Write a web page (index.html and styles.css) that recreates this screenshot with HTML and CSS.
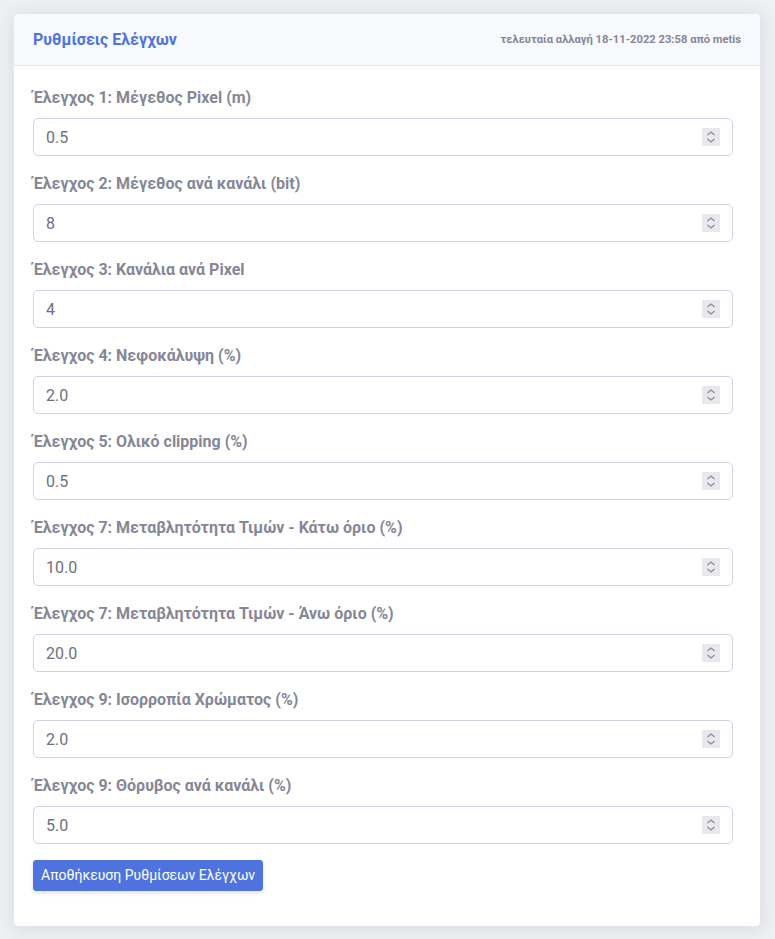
FILE: index.html
```html
<!DOCTYPE html>
<html lang="el">
<head>
<meta charset="utf-8">
<title>Ρυθμίσεις Ελέγχων</title>
<link rel="stylesheet" href="styles.css">
</head>
<body>
<div class="card">
  <div class="card-header">
    <h6 class="card-title">Ρυθμίσεις Ελέγχων</h6>
    <span class="card-meta">τελευταία αλλαγή 18-11-2022 23:58 από metis</span>
  </div>
  <form class="card-body">
    <div class="form-group">
      <label class="form-label">Έλεγχος 1: Μέγεθος Pixel (m)</label>
      <div class="num-field"><input class="form-control" type="text" value="0.5"><span class="spin"><svg viewBox="0 0 18 18" width="18" height="18"><path d="M5.5 7 L9 4 L12.5 7 M5.5 11 L9 14 L12.5 11" fill="none" stroke="#8a8b95" stroke-width="1.3"/></svg></span></div>
    </div>
    <div class="form-group">
      <label class="form-label">Έλεγχος 2: Μέγεθος ανά κανάλι (bit)</label>
      <div class="num-field"><input class="form-control" type="text" value="8"><span class="spin"><svg viewBox="0 0 18 18" width="18" height="18"><path d="M5.5 7 L9 4 L12.5 7 M5.5 11 L9 14 L12.5 11" fill="none" stroke="#8a8b95" stroke-width="1.3"/></svg></span></div>
    </div>
    <div class="form-group">
      <label class="form-label">Έλεγχος 3: Κανάλια ανά Pixel</label>
      <div class="num-field"><input class="form-control" type="text" value="4"><span class="spin"><svg viewBox="0 0 18 18" width="18" height="18"><path d="M5.5 7 L9 4 L12.5 7 M5.5 11 L9 14 L12.5 11" fill="none" stroke="#8a8b95" stroke-width="1.3"/></svg></span></div>
    </div>
    <div class="form-group">
      <label class="form-label">Έλεγχος 4: Νεφοκάλυψη (%)</label>
      <div class="num-field"><input class="form-control" type="text" value="2.0"><span class="spin"><svg viewBox="0 0 18 18" width="18" height="18"><path d="M5.5 7 L9 4 L12.5 7 M5.5 11 L9 14 L12.5 11" fill="none" stroke="#8a8b95" stroke-width="1.3"/></svg></span></div>
    </div>
    <div class="form-group">
      <label class="form-label">Έλεγχος 5: Ολικό clipping (%)</label>
      <div class="num-field"><input class="form-control" type="text" value="0.5"><span class="spin"><svg viewBox="0 0 18 18" width="18" height="18"><path d="M5.5 7 L9 4 L12.5 7 M5.5 11 L9 14 L12.5 11" fill="none" stroke="#8a8b95" stroke-width="1.3"/></svg></span></div>
    </div>
    <div class="form-group">
      <label class="form-label">Έλεγχος 7: Μεταβλητότητα Τιμών - Κάτω όριο (%)</label>
      <div class="num-field"><input class="form-control" type="text" value="10.0"><span class="spin"><svg viewBox="0 0 18 18" width="18" height="18"><path d="M5.5 7 L9 4 L12.5 7 M5.5 11 L9 14 L12.5 11" fill="none" stroke="#8a8b95" stroke-width="1.3"/></svg></span></div>
    </div>
    <div class="form-group">
      <label class="form-label">Έλεγχος 7: Μεταβλητότητα Τιμών - Άνω όριο (%)</label>
      <div class="num-field"><input class="form-control" type="text" value="20.0"><span class="spin"><svg viewBox="0 0 18 18" width="18" height="18"><path d="M5.5 7 L9 4 L12.5 7 M5.5 11 L9 14 L12.5 11" fill="none" stroke="#8a8b95" stroke-width="1.3"/></svg></span></div>
    </div>
    <div class="form-group">
      <label class="form-label">Έλεγχος 9: Ισορροπία Χρώματος (%)</label>
      <div class="num-field"><input class="form-control" type="text" value="2.0"><span class="spin"><svg viewBox="0 0 18 18" width="18" height="18"><path d="M5.5 7 L9 4 L12.5 7 M5.5 11 L9 14 L12.5 11" fill="none" stroke="#8a8b95" stroke-width="1.3"/></svg></span></div>
    </div>
    <div class="form-group">
      <label class="form-label">Έλεγχος 9: Θόρυβος ανά κανάλι (%)</label>
      <div class="num-field"><input class="form-control" type="text" value="5.0"><span class="spin"><svg viewBox="0 0 18 18" width="18" height="18"><path d="M5.5 7 L9 4 L12.5 7 M5.5 11 L9 14 L12.5 11" fill="none" stroke="#8a8b95" stroke-width="1.3"/></svg></span></div>
    </div>
    <button class="btn" type="button">Αποθήκευση Ρυθμίσεων Ελέγχων</button>
  </form>
</div>
</body>
</html>
```
FILE: styles.css
```css
* { box-sizing: border-box; }
html, body { margin: 0; }
body {
  background: #eff0f4;
  padding: 13px 14px 13px 13px;
  font-family: Roboto, "Noto Sans", sans-serif;
  color: #858796;
}
.card {
  background: #fff;
  border: 1px solid #e3e6f0;
  border-radius: 5px;
  box-shadow: 0 2px 20px 0 rgba(58, 59, 69, 0.12);
  overflow: hidden;
}
.card-header {
  display: flex;
  align-items: center;
  justify-content: space-between;
  background: #f8f9fc;
  border-bottom: 1px solid #e3e6f0;
  padding: 13px 19px;
  height: 52px;
}
.card-title {
  margin: 0;
  font-size: 16px;
  font-weight: 700;
  color: #4e73df;
}
.card-meta {
  font-size: 11.2px;
  font-weight: 700;
  color: #858796;
}
.card-body {
  display: block;
  padding: 20px 27px 35px 19px;
  margin: 0;
}
.form-group { margin-bottom: 16px; }
.form-label {
  display: block;
  font-size: 16px;
  font-weight: 700;
  line-height: 24px;
  margin-bottom: 8px;
  color: #858796;
}
.num-field { position: relative; }
.form-control {
  display: block;
  width: 100%;
  height: 38px;
  padding: 6px 12px;
  font-family: Roboto, "Noto Sans", sans-serif;
  font-size: 16px;
  color: #6e707e;
  background: #fff;
  border: 1px solid #d1d3e2;
  border-radius: 5px;
  outline: none;
}
.spin {
  position: absolute;
  right: 13px;
  top: 10px;
  width: 18px;
  height: 18px;
  background: #e9e9ed;
  display: flex;
}
.btn {
  display: inline-block;
  font-family: Roboto, "Noto Sans", sans-serif;
  font-size: 14px;
  line-height: 21px;
  padding: 4px 7px;
  color: #fff;
  background: #4e73df;
  border: 1px solid #4e73df;
  border-radius: 3px;
  box-shadow: 0 2px 4px rgba(58, 59, 69, 0.15);
  cursor: pointer;
}
```
